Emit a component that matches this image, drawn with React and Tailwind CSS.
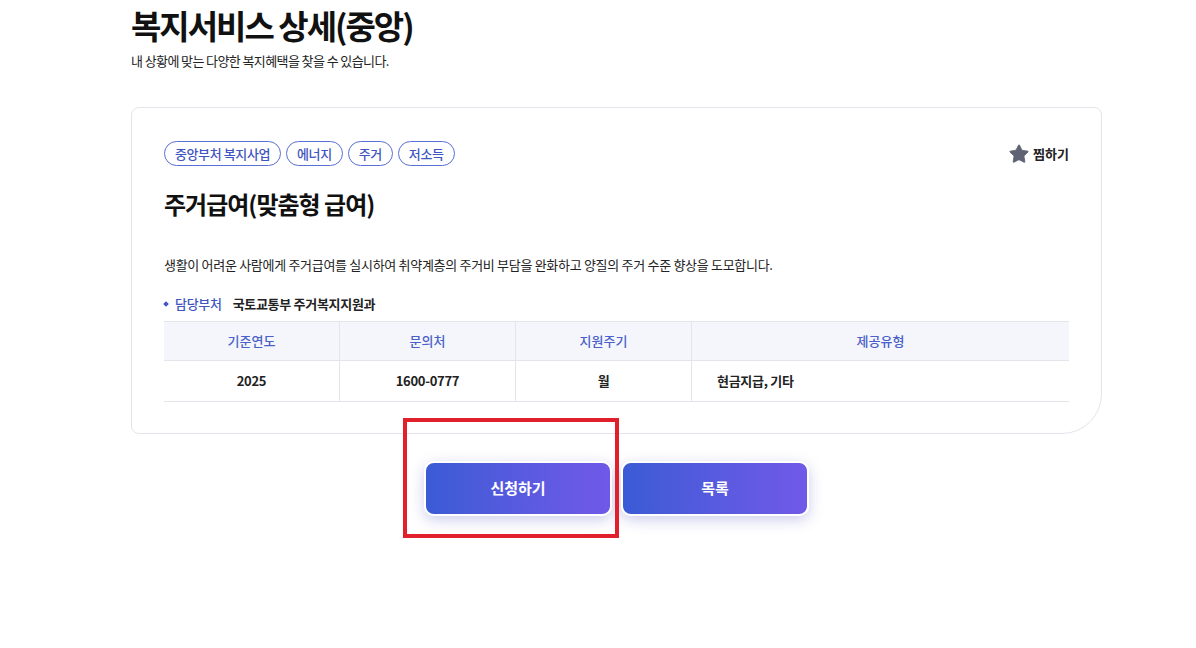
import { Star } from "lucide-react";

const tags = ["중앙부처 복지사업", "에너지", "주거", "저소득"];

const columns = [
  { head: "기준연도", value: "2025", w: "w-[175px]", center: true },
  { head: "문의처", value: "1600-0777", w: "w-[176px]", center: true },
  { head: "지원주기", value: "월", w: "w-[176px]", center: true },
  { head: "제공유형", value: "현금지급, 기타", w: "flex-1", center: false },
];

export default function App() {
  return (
    <div
      className="relative min-h-[648px] bg-white text-[#111]"
      style={{ fontFamily: '"Noto Sans CJK KR", "Noto Sans", sans-serif' }}
    >
      <div className="ml-[131px] w-[971px]">
        <h1 className="pt-[1px] text-[33px] font-bold leading-[48px] tracking-[-2px] text-[#111]">
          복지서비스 상세(중앙)
        </h1>
        <p className="mt-[2px] text-[13px] leading-[20px] tracking-[-0.6px] text-[#222]">
          내 상황에 맞는 다양한 복지혜택을 찾을 수 있습니다.
        </p>

        <div className="mt-[36px] rounded-lg rounded-br-[40px] border border-[#e3e5ea] px-[32px] pb-[31px] pt-[33px]">
          <div className="flex items-center justify-between">
            <div className="flex gap-[5px]">
              {tags.map((t) => (
                <span
                  key={t}
                  className="flex h-[25px] items-center rounded-full border border-[#5a6fd4] px-[10px] text-[13px] font-medium tracking-[-0.4px] text-[#3f55c0]"
                >
                  {t}
                </span>
              ))}
            </div>
            <button className="flex items-center gap-[3px] text-[13px] font-bold text-[#222]">
              <Star size={22} fill="#5f6273" stroke="#5f6273" strokeWidth={1} />
              찜하기
            </button>
          </div>

          <h2 className="mt-[20px] text-[24px] font-bold leading-[36px] tracking-[-1px] text-[#111]">
            주거급여(맞춤형 급여)
          </h2>

          <p className="mt-[33px] text-[13px] leading-[20px] tracking-[-0.3px] text-[#222]">
            생활이 어려운 사람에게 주거급여를 실시하여 취약계층의 주거비 부담을 완화하고 양질의 주거 수준 향상을 도모합니다.
          </p>

          <div className="mt-[19px] flex items-center text-[13px] leading-[20px] tracking-[-0.3px]">
            <span className="mr-[7px] h-[4px] w-[4px] rotate-45 bg-[#3f55c0]" />
            <span className="font-medium text-[#3f55c0]">담당부처</span>
            <span className="ml-[11px] font-bold text-[#222]">국토교통부 주거복지지원과</span>
          </div>

          <div className="mt-[7px] border-b border-[#e3e5ea]">
            <div className="flex h-[40px] border-y border-[#e3e5ea] bg-[#f4f6fb] text-[13px] font-medium text-[#4a5fc8]">
              {columns.map((c, i) => (
                <div
                  key={c.head}
                  className={`${c.w} flex items-center justify-center ${i > 0 ? "border-l border-[#e3e5ea]" : ""}`}
                >
                  {c.head}
                </div>
              ))}
            </div>
            <div className="flex h-[40px] text-[13px] font-bold tracking-[-0.3px] text-[#222]">
              {columns.map((c, i) => (
                <div
                  key={c.head}
                  className={`${c.w} flex items-center ${c.center ? "justify-center" : "pl-[25px]"} ${i > 0 ? "border-l border-[#e3e5ea]" : ""}`}
                >
                  {c.value}
                </div>
              ))}
            </div>
          </div>
        </div>

        <div className="mt-[27px] flex justify-center gap-[9px]">
          {["신청하기", "목록"].map((b) => (
            <button
              key={b}
              className="h-[55px] w-[188px] rounded-[10px] border-2 border-white bg-gradient-to-r from-[#3a5bd5] to-[#7059e8] text-[15px] font-bold text-white shadow-[0_4px_14px_rgba(90,90,200,0.3)]"
            >
              {b}
            </button>
          ))}
        </div>
      </div>

      <div className="pointer-events-none absolute left-[403px] top-[418px] h-[120px] w-[216px] border-[4px] border-[#e0202a]" />
    </div>
  );
}
